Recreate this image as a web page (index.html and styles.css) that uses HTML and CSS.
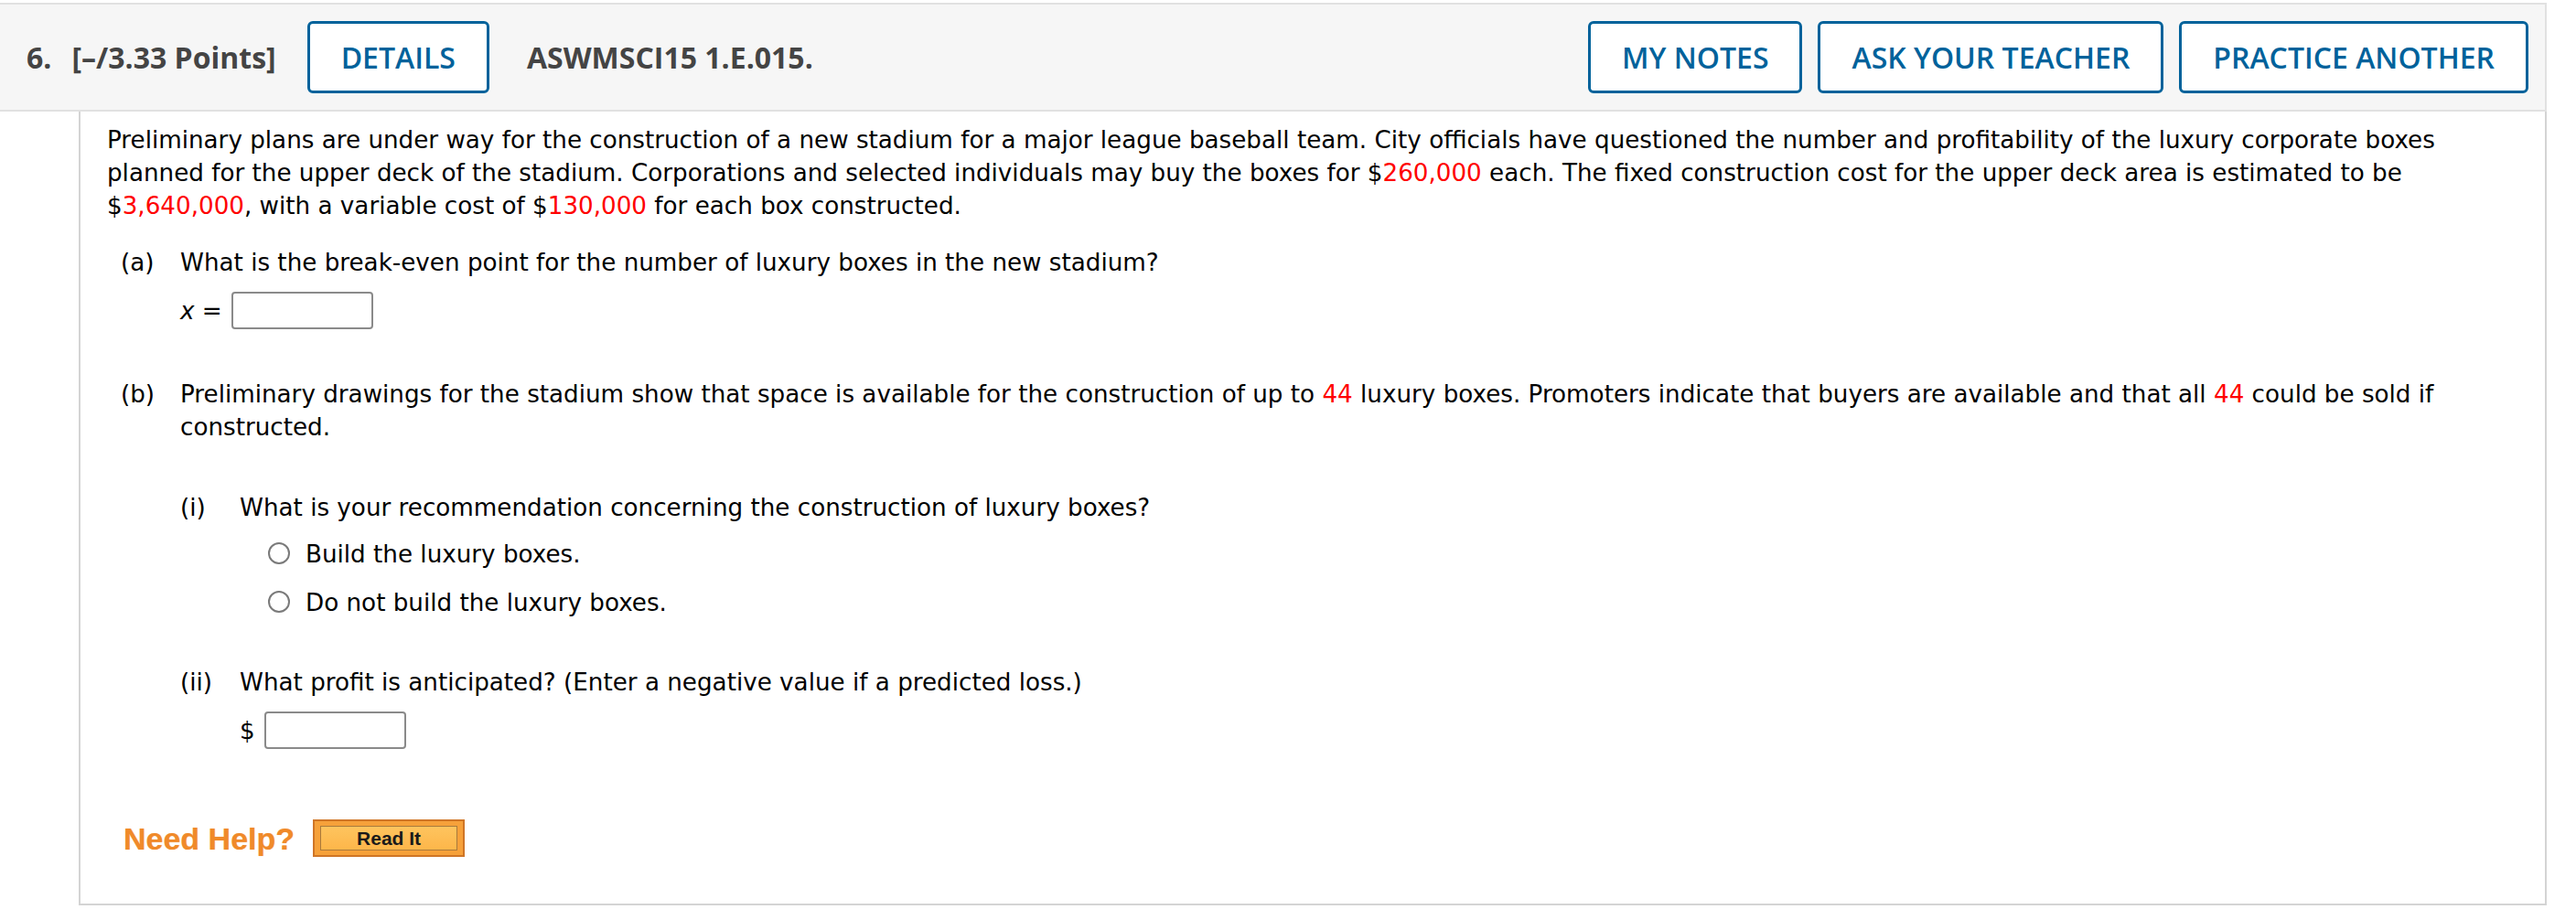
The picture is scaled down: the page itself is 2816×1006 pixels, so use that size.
FILE: index.html
```html
<!DOCTYPE html>
<html lang="en">
<head>
<meta charset="utf-8">
<title>Question 6</title>
<link rel="stylesheet" href="styles.css">
</head>
<body>
<div class="page">
  <header class="qhead">
    <span class="qnum">6.</span>
    <span class="qpoints">[–/3.33 Points]</span>
    <button class="hbtn details">DETAILS</button>
    <span class="qtitle">ASWMSCI15 1.E.015.</span>
    <div class="hright">
      <button class="hbtn">MY NOTES</button>
      <button class="hbtn">ASK YOUR TEACHER</button>
      <button class="hbtn">PRACTICE ANOTHER</button>
    </div>
  </header>
  <section class="qbody">
    <p class="intro">Preliminary plans are under way for the construction of a new stadium for a major league baseball team. City officials have questioned the number and profitability of the luxury corporate boxes planned for the upper deck of the stadium. Corporations and selected individuals may buy the boxes for $<span class="red">260,000</span> each. The fixed construction cost for the upper deck area is estimated to be $<span class="red">3,640,000</span>, with a variable cost of $<span class="red">130,000</span> for each box constructed.</p>

    <div class="part part-a">
      <span class="lbl">(a)</span>
      <div class="ptext">
        <div class="line">What is the break-even point for the number of luxury boxes in the new stadium?</div>
        <div class="ansrow"><span class="pre"><i>x</i> =</span><input class="ans" type="text"></div>
      </div>
    </div>

    <div class="part part-b">
      <span class="lbl">(b)</span>
      <div class="ptext">
        <div class="line">Preliminary drawings for the stadium show that space is available for the construction of up to <span class="red">44</span> luxury boxes. Promoters indicate that buyers are available and that all <span class="red">44</span> could be sold if constructed.</div>

        <div class="sub sub-i">
          <span class="lbl">(i)</span>
          <div class="ptext">
            <div class="line">What is your recommendation concerning the construction of luxury boxes?</div>
            <div class="opt opt-first"><span class="radio"></span><span>Build the luxury boxes.</span></div>
            <div class="opt"><span class="radio"></span><span>Do not build the luxury boxes.</span></div>
          </div>
        </div>

        <div class="sub sub-ii">
          <span class="lbl">(ii)</span>
          <div class="ptext">
            <div class="line">What profit is anticipated? (Enter a negative value if a predicted loss.)</div>
            <div class="ansrow"><span class="pre">$</span><input class="ans" type="text"></div>
          </div>
        </div>
      </div>
    </div>

    <div class="help">
      <span class="needhelp">Need Help?</span>
      <span class="readit"><span class="readit-inner">Read It</span></span>
    </div>
  </section>
</div>
</body>
</html>
```

FILE: styles.css
```css
html, body {
  margin: 0;
  padding: 0;
  background: #ffffff;
}

body {
  padding-top: 3px;
}

.page {
  width: 2784px;
}

/* ---------- header ---------- */
.qhead {
  box-sizing: border-box;
  height: 119px;
  display: flex;
  align-items: center;
  background: #f6f6f6;
  border-top: 2px solid #e1e1e1;
  border-bottom: 2px solid #e1e1e1;
  border-right: 2px solid #e1e1e1;
  padding-left: 29px;
  padding-right: 18px;
  font-family: "Open Sans", "Liberation Sans", sans-serif;
  font-size: 32px;
  color: #444444;
}

.qnum {
  font-weight: 700;
  margin-right: 22px;
}

.qpoints {
  font-weight: 700;
}

.qtitle {
  font-weight: 700;
  margin-left: 41px;
}

.hbtn {
  box-sizing: border-box;
  height: 79px;
  padding: 0 34px;
  background: #ffffff;
  border: 3px solid #00629b;
  border-radius: 6px;
  color: #00629b;
  font-family: "Open Sans", "Liberation Sans", sans-serif;
  font-weight: 600;
  font-size: 32px;
  cursor: pointer;
}

.details {
  margin-left: 34px;
}

.hright {
  margin-left: auto;
  display: flex;
  gap: 17px;
}

/* ---------- body ---------- */
.qbody {
  margin-left: 86px;
  border-left: 2px solid #d4d4d4;
  border-right: 2px solid #d4d4d4;
  border-bottom: 2px solid #d4d4d4;
  padding: 13px 40px 51px 29px;
  font-family: "DejaVu Sans", Verdana, sans-serif;
  font-size: 26.2px;
  line-height: 36px;
  color: #000000;
}

.intro {
  margin: 0 0 26px 0;
}

.red {
  color: #ff0000;
}

.part {
  display: grid;
  grid-template-columns: 65px 1fr;
  margin-left: 15px;
}

.part-b {
  margin-top: 53px;
}

.sub {
  display: grid;
  grid-template-columns: 65px 1fr;
}

.sub-i {
  margin-top: 52px;
}

.sub-ii {
  margin-top: 51px;
}

.ansrow {
  margin-top: 14px;
  height: 41px;
  display: flex;
  align-items: center;
}

.pre {
  margin-right: 2px;
  white-space: pre;
}

.pre i {
  font-style: italic;
}

.pre::after {
  content: " ";
}

.ans {
  box-sizing: border-box;
  width: 155px;
  height: 41px;
  border: 2px solid #8a8a8a;
  border-radius: 4px;
  background: #ffffff;
  margin: 0;
  padding: 0 6px;
  font: inherit;
}

.opt {
  display: flex;
  margin-top: 17px;
  margin-left: 31px;
  height: 36px;
}

.opt-first {
  margin-top: 15px;
}

.radio {
  box-sizing: border-box;
  width: 24px;
  height: 24px;
  margin-top: 5px;
  margin-right: 17px;
  border: 2px solid #7a7a7a;
  border-radius: 50%;
  background: #ffffff;
  flex: none;
}

/* ---------- help ---------- */
.help {
  margin-top: 77px;
  margin-left: 18px;
  display: flex;
  align-items: center;
  height: 41px;
}

.needhelp {
  font-family: "Liberation Sans", Arial, sans-serif;
  font-weight: 700;
  font-size: 34px;
  color: #f08a2a;
  text-shadow: 0 0 1px rgba(240, 138, 42, 0.6);
  margin-right: 20px;
}

.readit {
  box-sizing: border-box;
  width: 166px;
  height: 41px;
  background: #f6a13a;
  border: 2px solid #cf7526;
  padding: 5px 6px;
  display: flex;
}

.readit-inner {
  flex: 1;
  display: flex;
  align-items: center;
  justify-content: center;
  background: linear-gradient(#fec45e, #fdb64a);
  border: 1px solid #a97a3c;
  font-family: "Liberation Sans", Arial, sans-serif;
  font-weight: 700;
  font-size: 21px;
  line-height: 1;
  color: #1a1a1a;
}
```
